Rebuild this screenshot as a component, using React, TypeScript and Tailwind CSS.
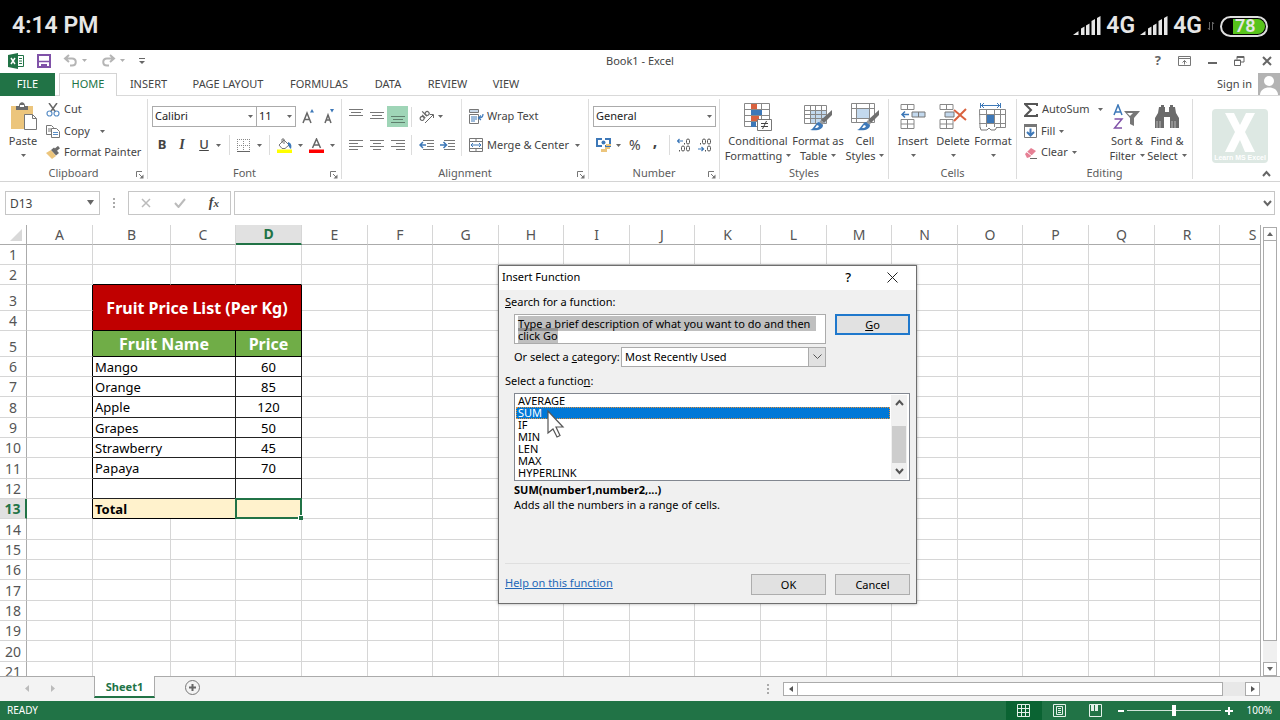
import { useEffect, useRef } from "react";
import type { ReactNode } from "react";

const columns = ["A", "B", "C", "D", "E", "F", "G", "H", "I", "J", "K", "L", "M", "N", "O", "P", "Q", "R", "S"];

const columnWidths = [
  "w-[66px]", "w-[78px]", "w-[65px]", "w-[66px]", "w-[66px]", "w-[65px]", "w-[66px]", "w-[65px]", "w-[66px]", "w-[65px]",
  "w-[66px]", "w-[66px]", "w-[65px]", "w-[66px]", "w-[65px]", "w-[66px]", "w-[66px]", "w-[65px]", "w-[66px]",
];

const rowHeights = [
  "h-[20px]", "h-[20px]", "h-[26px]", "h-[20px]", "h-[26px]",
  "h-[20px]", "h-[20px]", "h-[21px]", "h-[20px]", "h-[20px]", "h-[21px]", "h-[20px]", "h-[20px]",
  "h-[21px]", "h-[20px]", "h-[20px]", "h-[21px]", "h-[20px]", "h-[20px]", "h-[21px]", "h-[20px]",
];

const fruits: Record<number, [string, number]> = {
  6: ["Mango", 60],
  7: ["Orange", 85],
  8: ["Apple", 120],
  9: ["Grapes", 50],
  10: ["Strawberry", 45],
  11: ["Papaya", 70],
};

const functions = ["AVERAGE", "SUM", "IF", "MIN", "LEN", "MAX", "HYPERLINK"];

/* ---------- small shared pieces ---------- */

function Icon({ w, h, children }: { w: number; h: number; children: ReactNode }) {
  return (
    <svg width={w} height={h} viewBox={`0 0 ${w} ${h}`} fill="none" className="block shrink-0" aria-hidden="true">
      {children}
    </svg>
  );
}

function Caret({ light = false }: { light?: boolean }) {
  return (
    <Icon w={5} h={3}>
      <path d="M0 0h5L2.5 3z" fill={light ? "#b0b0b0" : "#666"} />
    </Icon>
  );
}

function Launcher() {
  return (
    <button aria-label="More options" className="absolute right-[3px] bottom-0">
      <Icon w={8} h={8}>
        <path d="M.5 6V.5H6M3 3l3 3" stroke="#777" />
        <path d="M7.500 3.500v4h-4z" fill="#777" />
      </Icon>
    </button>
  );
}

function Group({ label, width, launcher, children }: { label: string; width: string; launcher?: boolean; children: ReactNode }) {
  return (
    <section className={`${width} flex shrink-0 flex-col border-r border-[#dcdcdc]`}>
      <div className="flex-1">{children}</div>
      <div className="relative h-3 text-center leading-3 text-[#5c5c5c]">
        {label}
        {launcher && <Launcher />}
      </div>
    </section>
  );
}

function Divider() {
  return <span className="block h-5 w-px bg-[#dcdcdc]" />;
}

function BigButton({ icon, lines, width }: { icon: ReactNode; lines: string[]; width: string }) {
  return (
    <button className={`${width} flex flex-col items-center`}>
      <span className="flex h-[34px] items-center pt-0.5">{icon}</span>
      <span className="block leading-[15px] whitespace-nowrap">{lines[0]}</span>
      <span className="flex h-[15px] items-center gap-1 leading-[15px] whitespace-nowrap">
        {lines[1]}
        <Caret />
      </span>
    </button>
  );
}

function Lines({ rows, stroke = "#777" }: { rows: [number, number][]; stroke?: string }) {
  return (
    <Icon w={14} h={12}>
      {rows.map(([x, x2], i) => (
        <path key={i} d={`M${x} ${i * 3 + 1.5}H${x2}`} stroke={stroke} />
      ))}
    </Icon>
  );
}

/* ---------- phone status bar ---------- */

function Signal() {
  return (
    <Icon w={28} h={20}>
      <path d="M0 19l5.500-4v4zM8 12.500l3.500-2V19H8zM13 9.500l3.500-2V19H13zM18.500 5l3.500-2v16h-3.500zM24 2l3.500-2v19H24z" fill="#e6e6e6" />
    </Icon>
  );
}

function PhoneBar() {
  return (
    <header className="flex h-[50px] shrink-0 items-center justify-between bg-black px-3 pt-0.5 font-[Roboto,sans-serif] text-[23px] font-semibold text-[#e6e6e6]">
      <span>4:14 PM</span>
      <div className="flex items-center gap-[5px]">
        <Signal />
        <span>4G</span>
        <Signal />
        <span>4G</span>
        <Icon w={8} h={10}>
          <path d="M2.500 1v8M1 7l1.500 2M5.500 9V1L7 3" stroke="#666" />
        </Icon>
        <div className="flex h-[21px] w-12 items-center justify-end rounded-full border-2 border-[#dedede] p-px">
          <span className="flex h-[15px] w-8 items-center rounded-l-xs rounded-r-full bg-[#57c31b] pl-0.5 text-lg leading-none">78</span>
        </div>
      </div>
    </header>
  );
}

/* ---------- window chrome ---------- */

function TitleBar() {
  return (
    <div className="grid h-[23px] shrink-0 grid-cols-3 items-center px-2 pb-0.5">
      <div className="flex items-center">
        <Icon w={17} h={16}>
          <path d="M9 2.500h6.500v11H9M11 5.500h3M11 8h3M11 10.500h3" stroke="#217346" />
          <path d="M0 2l10-2v16L0 14z" fill="#217346" />
          <path d="M3 5l4 6M7 5l-4 6" stroke="#fff" strokeWidth="1.500" />
        </Icon>
        <button aria-label="Save" className="ml-3">
          <Icon w={14} h={14}>
            <path d="M1 1h12v12H1z" stroke="#8052a8" strokeWidth="2" />
            <path d="M2 7.500h10" stroke="#8052a8" strokeWidth="1.500" />
            <path d="M4 10h6v4H8v-2H6v2H4z" fill="#8052a8" />
          </Icon>
        </button>
        <button aria-label="Undo" className="ml-3 flex items-center gap-1">
          <Icon w={15} h={13}>
            <path d="M6 1L2 4.500 6 8M2.500 4.500H9c5 0 5 7 0 7H7" stroke="#b5b5b5" strokeWidth="2" />
          </Icon>
          <Caret light />
        </button>
        <button aria-label="Redo" className="ml-3.5 flex items-center gap-1">
          <Icon w={15} h={13}>
            <path d="M9 1l4 3.500L9 8M12.500 4.500H6c-5 0-5 7 0 7h2" stroke="#b5b5b5" strokeWidth="2" />
          </Icon>
          <Caret light />
        </button>
        <button aria-label="Customize toolbar" className="ml-3.5">
          <Icon w={6} h={6}>
            <path d="M0 .5h6" stroke="#666" />
            <path d="M0 3h6L3 6z" fill="#666" />
          </Icon>
        </button>
      </div>
      <h1 className="pt-0.5 text-center text-[11px]">Book1 - Excel</h1>
      <div className="flex items-center justify-end gap-[17px] text-[#666]">
        <button className="text-[13px] leading-none font-bold">?</button>
        <button aria-label="Ribbon options">
          <Icon w={13} h={10}>
            <path d="M.5.5h12v9H.5zM1 2.500h11M6.500 8.500V4.500M4.500 6.500l2-2 2 2" stroke="#777" />
          </Icon>
        </button>
        <button aria-label="Minimize">
          <Icon w={9} h={10}>
            <path d="M0 7h9" stroke="#666" strokeWidth="2" />
          </Icon>
        </button>
        <button aria-label="Restore">
          <Icon w={11} h={10}>
            <path d="M.5 4h6v5.500h-6zM.5 4.500h6M3 3.500V.5h7V6H7M3 1.500h7" stroke="#666" />
          </Icon>
        </button>
        <button aria-label="Close">
          <Icon w={10} h={10}>
            <path d="M1 1l8 8M9 1L1 9" stroke="#666" strokeWidth="2" />
          </Icon>
        </button>
      </div>
    </div>
  );
}

function TabBar() {
  return (
    <nav className="flex h-[23px] shrink-0 border-b border-[#d9d9d9] text-[11px] leading-[22px]">
      <button className="-mb-px w-[55px] bg-[#217346] pb-px text-white">FILE</button>
      <button className="-mb-px ml-1 w-[58px] border border-b-0 border-[#d4d4d4] bg-white pb-0.5 leading-5 text-[#217346]">HOME</button>
      <button className="w-[63px]">INSERT</button>
      <button className="w-24">PAGE LAYOUT</button>
      <button className="w-[86px]">FORMULAS</button>
      <button className="w-[52px]">DATA</button>
      <button className="w-[67px]">REVIEW</button>
      <button className="w-[50px]">VIEW</button>
      <div className="ml-auto flex">
        <a href="#signin" className="mr-1.5">Sign in</a>
        <svg width="22" height="22" viewBox="0 0 22 22" aria-hidden="true">
          <path d="M0 0h22v22H0z" fill="#b3b3b3" />
          <circle cx="11" cy="8" r="5" fill="#fff" />
          <path d="M2 22c0-10 18-10 18 0z" fill="#fff" />
        </svg>
      </div>
    </nav>
  );
}

/* ---------- ribbon ---------- */

function ClipboardGroup() {
  return (
    <Group label="Clipboard" width="w-[148px]" launcher>
      <div className="flex">
        <button className="flex w-[46px] flex-col items-center">
          <Icon w={28} h={31}>
            <path d="M2 7h22v23H2z" fill="#ecc57c" />
            <path d="M7 7h3c0-5 6-5 6 0h3v4H7z" fill="#6b6b6b" />
            <path d="M11 6h4v2h-4z" fill="#fff" />
            <path d="M15.500 15.500h8l4 4v11h-12z" fill="#fff" stroke="#777" />
            <path d="M23.500 15.500v4h4" stroke="#777" />
          </Icon>
          <span className="mt-[3px] leading-[15px]">Paste</span>
          <span className="mt-1.5"><Caret /></span>
        </button>
        <div className="flex flex-col">
          <button className="flex h-[21px] items-center gap-1">
            <Icon w={14} h={14}>
              <path d="M3 0l6.500 9M11 0L4.500 9" stroke="#666" strokeWidth="1.500" />
              <circle cx="3.500" cy="10.500" r="2.500" stroke="#5b8fc7" strokeWidth="1.200" />
              <circle cx="10.500" cy="10.500" r="2.500" stroke="#5b8fc7" strokeWidth="1.200" />
            </Icon>
            Cut
          </button>
          <button className="flex h-[22px] items-center gap-1">
            <Icon w={14} h={13}>
              <path d="M.5.5h5l2 2v7h-7zM2 4h3M2 6h3" stroke="#777" />
              <path d="M5.500 3.500h5l3 3v6h-8z" fill="#fff" stroke="#777" />
              <path d="M7 7.500h5M7 9.500h5" stroke="#5b8fc7" />
            </Icon>
            <span className="mr-1.5">Copy</span>
            <Caret />
          </button>
          <button className="flex h-[21px] items-center gap-1 whitespace-nowrap">
            <Icon w={14} h={13}>
              <path d="M0 7l5-3 5 6-4 3z" fill="#ecc57c" />
              <path d="M5 4l3-2.500 5 5.500-3 2.500z" fill="#6b6b6b" />
              <path d="M9.500 4L13 1" stroke="#6b6b6b" strokeWidth="3" />
            </Icon>
            Format Painter
          </button>
        </div>
      </div>
    </Group>
  );
}

function FontGroup() {
  return (
    <Group label="Font" width="w-[194px]" launcher>
      <div className="flex h-[35px] items-center pl-1">
        <div className="relative">
          <select aria-label="Font" className="block h-[21px] w-[105px] appearance-none border border-[#ababab] px-0.5 text-[#222]">
            <option>Calibri</option>
          </select>
          <span className="pointer-events-none absolute top-[9px] right-1"><Caret /></span>
        </div>
        <div className="relative -ml-px">
          <select aria-label="Font size" className="block h-[21px] w-10 appearance-none border border-[#ababab] px-0.5 text-[#222]">
            <option>11</option>
          </select>
          <span className="pointer-events-none absolute top-[9px] right-1"><Caret /></span>
        </div>
        <button aria-label="Increase font size" className="ml-1.5">
          <Icon w={13} h={15}>
            <path d="M1 14L5 4l4 10M2.500 10.500h5" stroke="#666" strokeWidth="1.500" />
            <path d="M8 3.500h4L10 0z" fill="#3d78b8" />
          </Icon>
        </button>
        <button aria-label="Decrease font size" className="ml-2">
          <Icon w={13} h={15}>
            <path d="M2 14l3-8 3 8M3 11h4" stroke="#666" strokeWidth="1.500" />
            <path d="M7 0h4L9 3.500z" fill="#3d78b8" />
          </Icon>
        </button>
      </div>
      <div className="flex h-[22px] items-center pl-2 text-[13px]">
        <button className="w-3 font-bold">B</button>
        <button className="ml-2 w-3 font-[Liberation_Serif,serif] text-sm font-bold italic">I</button>
        <button className="ml-2.5 w-3 font-medium underline">U</button>
        <span className="mr-2 ml-1.5"><Caret /></span>
        <Divider />
        <button aria-label="Borders" className="ml-[7px] flex items-center gap-[7px]">
          <Icon w={13} h={13}>
            <path d="M0 .5h13M0 6.500h13M.5 0v13M6.500 0v13M12.500 0v13" stroke="#888" strokeDasharray="1 1" />
            <path d="M0 12.500h13" stroke="#666" />
          </Icon>
          <Caret />
        </button>
        <span className="mx-[7px]"><Divider /></span>
        <button aria-label="Fill color" className="flex items-center gap-1.5">
          <Icon w={15} h={15}>
            <path d="M2 7l5-5 5 5-4 3.500H5z" fill="#fff" stroke="#777" />
            <path d="M5 5V1h2v5" stroke="#777" />
            <path d="M11 4c3 1 4 3 3 7-2-1-2-3-3-4z" fill="#3d78b8" />
            <path d="M0 11.500h15V15H0z" fill="#ff0" />
          </Icon>
          <Caret />
        </button>
        <button aria-label="Font color" className="ml-1.5 flex items-center gap-1.5">
          <Icon w={15} h={15}>
            <path d="M3.500 10l4-9 4 9M5 7h5" stroke="#666" strokeWidth="1.500" />
            <path d="M0 11.500h15V15H0z" fill="#f00" />
          </Icon>
          <Caret />
        </button>
      </div>
    </Group>
  );
}

function IndentIcon({ right }: { right?: boolean }) {
  return (
    <Icon w={15} h={12}>
      <path d="M4 1.500h11M8 4.500h7M8 7.500h7M4 10.500h11" stroke="#777" />
      <path d={right ? "M0 6h6M3.500 3l3 3-3 3" : "M1 6h6M4 3L1 6l3 3"} stroke="#3d78b8" strokeWidth="1.500" />
    </Icon>
  );
}

function AlignmentGroup() {
  return (
    <Group label="Alignment" width="w-[247px]" launcher>
      <div className="flex">
        <div className="flex flex-col pl-[3px]">
          <div className="flex h-[35px] items-center">
            <button aria-label="Top align" className="flex h-[21px] w-[21px] justify-center pt-0.5"><Lines rows={[[0, 14], [2, 12], [0, 14]]} /></button>
            <button aria-label="Middle align" className="flex h-[21px] w-[21px] items-center justify-center"><Lines rows={[[0, 14], [2, 12], [0, 14]]} /></button>
            <button aria-label="Bottom align" className="flex h-[21px] w-[21px] items-end justify-center bg-[#9fd5b7]"><Lines rows={[[0, 14], [2, 12], [0, 14]]} stroke="#5f7f6d" /></button>
            <span className="mx-[3px]"><Divider /></span>
            <button aria-label="Orientation" className="ml-1 flex items-center gap-1">
              <Icon w={15} h={14}>
                <g transform="rotate(-45 6 7)" stroke="#666" strokeWidth="1.200">
                  <circle cx="3" cy="6" r="2" />
                  <path d="M5.500 3.500V8M8 1v7" />
                  <circle cx="10" cy="6" r="2" />
                </g>
                <path d="M6 13l8-8M11 4.500h3.500V8" stroke="#666" />
              </Icon>
              <Caret />
            </button>
          </div>
          <div className="flex h-[22px] items-center">
            <button aria-label="Align left" className="flex w-[21px] justify-center"><Lines rows={[[0, 14], [0, 9], [0, 14], [0, 9]]} /></button>
            <button aria-label="Center" className="flex w-[21px] justify-center"><Lines rows={[[0, 14], [3, 11], [0, 14], [3, 11]]} /></button>
            <button aria-label="Align right" className="flex w-[21px] justify-center"><Lines rows={[[0, 14], [5, 14], [0, 14], [5, 14]]} /></button>
            <span className="mx-[3px]"><Divider /></span>
            <button aria-label="Decrease indent" className="ml-1"><IndentIcon /></button>
            <button aria-label="Increase indent" className="ml-1.5"><IndentIcon right /></button>
          </div>
        </div>
        <div className="ml-1.5 flex flex-col border-l border-[#e1e1e1] pl-[7px]">
          <button className="flex h-[35px] items-center gap-[3px]">
            <Icon w={15} h={15}>
              <path d="M.5.500h9v3h-9z" fill="#c9d9ea" stroke="#777" />
              <path d="M.5 5.500h9v9h-9z" fill="#fff" stroke="#777" />
              <path d="M2 8h6M2 10h6M2 12h4" stroke="#3d78b8" />
              <path d="M14 5c0 3-1 4-4 4M12 6.500L9.500 9l2.500 2" stroke="#3d78b8" strokeWidth="1.200" />
            </Icon>
            Wrap Text
          </button>
          <button className="flex h-[22px] items-center gap-1 whitespace-nowrap">
            <Icon w={14} h={14}>
              <path d="M.5.5h13v13H.5zM0 3.500h14M0 10.500h14M7 0v3M7 11v3" stroke="#777" />
              <path d="M2 7h10M4 5L2 7l2 2M10 5l2 2-2 2" stroke="#3d78b8" />
            </Icon>
            Merge &amp; Center
            <span className="ml-0.5"><Caret /></span>
          </button>
        </div>
      </div>
    </Group>
  );
}

function NumberGroup() {
  return (
    <Group label="Number" width="w-[131px]" launcher>
      <div className="flex h-[35px] items-center pl-1">
        <div className="relative">
          <select aria-label="Number format" className="block h-[21px] w-[123px] appearance-none border border-[#ababab] px-0.5 text-[#222]">
            <option>General</option>
          </select>
          <span className="pointer-events-none absolute top-[9px] right-1"><Caret /></span>
        </div>
      </div>
      <div className="flex h-[22px] items-center pl-[7px]">
        <button aria-label="Accounting format" className="flex items-center gap-1">
          <Icon w={16} h={15}>
            <path d="M1 1h13v7H1z" fill="#fff" stroke="#3d78b8" strokeWidth="2" />
            <path d="M6 1h3M6 8h3" stroke="#fff" strokeWidth="2" />
            <circle cx="7.500" cy="4.500" r="2" fill="#3d78b8" />
            <path d="M10 6h5v2h-5zM9 9h5v2H9zM5 11h6v3H5z" fill="#ecc57c" />
          </Icon>
          <Caret />
        </button>
        <button className="ml-2 text-sm">%</button>
        <button className="ml-3 pb-2 text-base leading-3 font-bold">,</button>
        <span className="mr-[7px] ml-3"><Divider /></span>
        <button aria-label="Increase decimal">
          <Icon w={14} h={14}>
            <path d="M0 3h6M2.500 1L.5 3l2 2" stroke="#3d78b8" strokeWidth="1.200" />
            <path d="M7.500 5v1.500M2.500 12v1.500" stroke="#555" />
            <rect x="9.500" y="1" width="3" height="5" rx="1.500" stroke="#555" />
            <rect x="4.500" y="8" width="3" height="5" rx="1.500" stroke="#555" />
            <rect x="9.500" y="8" width="3" height="5" rx="1.500" stroke="#555" />
          </Icon>
        </button>
        <button aria-label="Decrease decimal" className="ml-[7px]">
          <Icon w={14} h={14}>
            <path d="M0 11h6M3.500 9l2 2-2 2" stroke="#3d78b8" strokeWidth="1.200" />
            <path d="M2.500 5v1.500M7.500 12v1.500" stroke="#555" />
            <rect x="4.500" y="1" width="3" height="5" rx="1.500" stroke="#555" />
            <rect x="9.500" y="1" width="3" height="5" rx="1.500" stroke="#555" />
            <rect x="9.500" y="8" width="3" height="5" rx="1.500" stroke="#555" />
          </Icon>
        </button>
      </div>
    </Group>
  );
}

function Brush() {
  return (
    <g>
      <path d="M28 7v5l-8 8-3-3z" fill="#6f6f6f" />
      <path d="M17 17l3 3-1.500 2-3-3z" fill="#999" />
      <path d="M15 19l4 3c0 4-4 6-13 5 4-1 5-7 9-8z" fill="#3d78b8" />
      <path d="M13 22l2 1c-1 2-2 2-4 2z" fill="#fff" />
    </g>
  );
}

function StylesGroup() {
  return (
    <Group label="Styles" width="w-[169px]">
      <div className="flex pl-1.5">
        <BigButton
          width="w-16"
          lines={["Conditional", "Formatting"]}
          icon={
            <Icon w={28} h={28}>
              <path d="M.5.5h25v23H.5zM0 6.500h26M0 12.500h26M0 18.500h26M7.500 0v24M17.500 0v24" stroke="#888" />
              <path d="M7 1h6v5H7zM7 13h8v5H7z" fill="#d9623f" />
              <path d="M7 7h11v5H7zM7 19h5v5H7z" fill="#3d78b8" />
              <path d="M13.500 16.500h14v11h-14z" fill="#fff" stroke="#777" />
              <path d="M17 20.500h7M17 23.500h7M18.500 26l4-8" stroke="#444" />
            </Icon>
          }
        />
        <BigButton
          width="w-14"
          lines={["Format as", "Table"]}
          icon={
            <Icon w={28} h={28}>
              <path d="M6 8h17v12H6z" fill="#c3d9ee" />
              <path d="M.5 2.500h22v18H.5zM0 7.500h23M0 11.500h23M0 15.500h23M6.500 2v18M11.500 2v18M17.500 2v18" stroke="#888" />
              <Brush />
            </Icon>
          }
        />
        <BigButton
          width="w-[38px]"
          lines={["Cell", "Styles"]}
          icon={
            <Icon w={28} h={28}>
              <path d="M5 5h14v10H5z" fill="#c3d9ee" />
              <path d="M.5.5h23v19H.5zM0 5.500h24M0 15.500h24M5.500 0v20M18.500 0v20" stroke="#888" />
              <Brush />
            </Icon>
          }
        />
      </div>
    </Group>
  );
}

function CellsGroup() {
  return (
    <Group label="Cells" width="w-[128px]">
      <div className="flex pl-1">
        <BigButton
          width="w-10"
          lines={["Insert", ""]}
          icon={
            <Icon w={26} h={26}>
              <path d="M1 .5h13v5H1zM7.500 0v6M1 15.500h13v9H1zM1 20h13M7.500 15v10" stroke="#888" />
              <path d="M12 8h13v5H12z" fill="#c3d9ee" stroke="#777" />
              <path d="M18.500 8v5" stroke="#777" />
              <path d="M2 10.500h7M5 7.500l-3 3 3 3" stroke="#3d78b8" strokeWidth="1.500" />
            </Icon>
          }
        />
        <BigButton
          width="w-10"
          lines={["Delete", ""]}
          icon={
            <Icon w={28} h={26}>
              <path d="M1 .5h13v5H1zM7.500 0v6M1 15.500h13v9H1zM1 20h13M7.500 15v10" stroke="#888" />
              <path d="M6 8h9v5H6z" fill="#c3d9ee" stroke="#777" />
              <path d="M15 6l12 10M27 5L15 17" stroke="#d9623f" strokeWidth="2" />
            </Icon>
          }
        />
        <BigButton
          width="w-10"
          lines={["Format", ""]}
          icon={
            <Icon w={28} h={28}>
              <path d="M1.500 0v5M21.500 0v5M2 2.500h19M5 0L2.500 2.500 5 5M18 0l2.500 2.500L18 5" stroke="#3d78b8" />
              <path d="M.5 6.500h26v18H1zM0 11.500h27M0 20.500h27M7.500 6v18M15.500 6v18M21.500 6v18" stroke="#888" />
              <path d="M8 12h7v8H8z" fill="#3d78b8" />
              <path d="M1 24l1 3h6l2-2 2 2h4l2-3" fill="#fff" stroke="#777" />
            </Icon>
          }
        />
      </div>
    </Group>
  );
}

function EditingGroup() {
  return (
    <Group label="Editing" width="w-[176px]">
      <div className="flex pl-[7px]">
        <div className="flex w-[83px] flex-col">
          <button className="flex h-[21px] items-center gap-1">
            <Icon w={14} h={14}>
              <path d="M13 3V1H1l6 6-6 6h12v-2" stroke="#555" strokeWidth="2" />
            </Icon>
            AutoSum
            <span className="ml-1"><Caret /></span>
          </button>
          <button className="flex h-[22px] items-center gap-1">
            <Icon w={13} h={14}>
              <path d="M.5.5h12v13H.5z" fill="#fff" stroke="#777" />
              <path d="M0 0h13v3H0z" fill="#777" />
              <path d="M6.500 4.500v7M3 8l3.500 3.500L10 8" stroke="#3d78b8" strokeWidth="2" />
            </Icon>
            Fill
            <Caret />
          </button>
          <button className="flex h-[21px] items-center gap-1">
            <Icon w={13} h={12}>
              <path d="M1 7l6-6 5 3-6 6-3 1z" fill="#e68095" />
              <path d="M3 5l5 4" stroke="#fff" />
              <path d="M6 11.500h7" stroke="#666" />
            </Icon>
            Clear
            <Caret />
          </button>
        </div>
        <BigButton
          width="w-10"
          lines={["Sort &", "Filter"]}
          icon={
            <Icon w={28} h={26}>
              <path d="M1 11L5 1l4 10M2.500 8h5" stroke="#3d78b8" strokeWidth="1.500" />
              <path d="M1.500 15H9l-7.500 9H9" stroke="#8052a8" strokeWidth="1.500" />
              <path d="M11 7h16l-6 7v8l-4-2v-6z" fill="#777" />
              <path d="M14 9h6l-3 3z" fill="#fff" />
            </Icon>
          }
        />
        <BigButton
          width="w-10"
          lines={["Find &", "Select"]}
          icon={
            <Icon w={26} h={24}>
              <path d="M5 2h2V0h3v2h1v5h4V2h1V0h3v2h2l1 6 3 5v10h-9V12h-6v11H1V13l3-5z" fill="#6b6b6b" />
              <path d="M3 16v7M6 16v7M18 16v7M21 16v7" stroke="#bbb" />
            </Icon>
          }
        />
      </div>
    </Group>
  );
}

function Ribbon() {
  return (
    <div className="flex h-[86px] shrink-0 border-b border-[#d4d4d4] pt-[3px] pb-0.5 text-[11px]">
      <ClipboardGroup />
      <FontGroup />
      <AlignmentGroup />
      <NumberGroup />
      <StylesGroup />
      <CellsGroup />
      <EditingGroup />
      <div className="relative flex flex-1 justify-end pt-2.5 pr-3">
        <div className="flex h-[54px] w-14 flex-col items-center justify-end rounded bg-[#dde8e3] font-[Liberation_Sans,sans-serif] text-[7px] font-bold whitespace-nowrap text-white">
          <Icon w={32} h={42}>
            <path d="M1 2h9l6 12 6-12h9L21 21l10 20H21l-5-12-6 12H1l10-20z" fill="#fff" />
          </Icon>
          <span className="leading-[10px]">Learn MS Excel</span>
        </div>
        <button aria-label="Collapse ribbon" className="absolute right-[9px] bottom-0.5">
          <Icon w={9} h={7}>
            <path d="M1 6l3.500-4L8 6" stroke="#666" strokeWidth="2" />
          </Icon>
        </button>
      </div>
    </div>
  );
}

function FormulaBar() {
  return (
    <div className="flex shrink-0 items-center px-[5px] pt-[9px] pb-[10px]">
      <div className="relative">
        <input aria-label="Name box" defaultValue="D13" className="block h-6 w-[95px] border border-[#c6c6c6] px-1 text-xs" />
        <span className="pointer-events-none absolute top-[9px] right-1.5">
          <Icon w={7} h={5}>
            <path d="M0 0h7L3.500 5z" fill="#666" />
          </Icon>
        </span>
      </div>
      <span className="mr-[13px] ml-[13px]">
        <Icon w={2} h={10}>
          <path d="M0 0h2v2H0zM0 4h2v2H0zM0 8h2v2H0z" fill="#aaa" />
        </Icon>
      </span>
      <div className="flex h-6 w-[103px] items-center justify-between border border-[#c6c6c6] pr-[11px] pl-3">
        <button aria-label="Cancel entry">
          <Icon w={10} h={10}>
            <path d="M1 1l8 8M9 1L1 9" stroke="#bbb" strokeWidth="1.500" />
          </Icon>
        </button>
        <button aria-label="Enter">
          <Icon w={12} h={10}>
            <path d="M1 5l3.500 4L11 1" stroke="#bbb" strokeWidth="2" />
          </Icon>
        </button>
        <button aria-label="Insert function" className="font-[Liberation_Serif,serif] text-sm leading-none font-bold italic">
          f<span className="text-[11px]">x</span>
        </button>
      </div>
      <div className="ml-[3px] flex h-6 flex-1 items-center border border-[#c6c6c6] pr-0.5">
        <input aria-label="Formula" className="h-full flex-1 px-1 text-xs outline-none" />
        <button aria-label="Expand formula bar">
          <Icon w={9} h={7}>
            <path d="M1 1l3.500 4L8 1" stroke="#666" strokeWidth="2" />
          </Icon>
        </button>
      </div>
    </div>
  );
}

/* ---------- worksheet ---------- */

// the cells of columns B to D, which hold the price list
function ListCells({ row }: { row: number }) {
  if (row === 4) return null;
  if (row === 3) {
    return (
      <td colSpan={3} rowSpan={2} className="border-r border-b border-black bg-[#c00000] p-0 text-center text-base/6 font-bold text-white">
        Fruit Price List (Per Kg)
      </td>
    );
  }
  if (row === 5) {
    return (
      <>
        <td colSpan={2} className="border-r border-b border-black bg-[#70ad47] p-0 text-center text-base/6 font-bold text-white">Fruit Name</td>
        <td className="border-r border-b border-black bg-[#70ad47] p-0 text-center text-base/6 font-bold text-white">Price</td>
      </>
    );
  }
  if (row === 13) {
    return (
      <>
        <td colSpan={2} className="border-r border-b border-black bg-[#fff2cc] p-0 pl-0.5 text-[13px] font-bold text-black">Total</td>
        <td className="relative bg-[#fff2cc] p-0">
          <span className="absolute -top-px right-0 bottom-0 -left-px border-2 border-[#217346]" />
          <span className="absolute -right-px -bottom-px size-[5px] border-t border-l border-white bg-[#217346]" />
        </td>
      </>
    );
  }
  if (row > 5 && row < 13) {
    const item = fruits[row];
    return (
      <>
        <td colSpan={2} className="border-r border-b border-[#222] p-0 pl-0.5 text-[13px] text-black">{item?.[0]}</td>
        <td className="border-r border-b border-[#222] p-0 text-center text-[13px] text-black">{item?.[1]}</td>
      </>
    );
  }
  const line = row === 2 ? "border-b-black" : "border-b-[#d6d6d6]";
  return (
    <>
      <td className={`border-r border-b border-r-[#d6d6d6] p-0 ${line}`} />
      <td className={`border-r border-b border-r-[#d6d6d6] p-0 ${line}`} />
      <td className={`border-r border-b border-r-[#d6d6d6] p-0 ${line}`} />
    </>
  );
}

function Sheet() {
  return (
    <table className="w-[1286px] table-fixed border-separate border-spacing-0 leading-[18px]">
      <colgroup>
        <col className="w-[27px]" />
        {columnWidths.map((w, i) => (
          <col key={i} className={w} />
        ))}
      </colgroup>
      <thead>
        <tr className="h-[20px] text-sm/[18px] text-[#555]">
          <th className="border-r border-b border-[#ababab] p-0">
            <span className="flex justify-end pr-1">
              <Icon w={12} h={12}>
                <path d="M12 0v12H0z" fill="#d9d9d9" />
              </Icon>
            </span>
          </th>
          {columns.map((c) => (
            <th
              key={c}
              className={
                c === "D"
                  ? "border-r border-b-2 border-r-[#d6d6d6] border-b-[#217346] bg-[#e1e1e1] p-0 font-bold text-[#217346]"
                  : "border-r border-b border-r-[#d6d6d6] border-b-[#ababab] p-0 font-normal"
              }
            >
              {c}
            </th>
          ))}
        </tr>
      </thead>
      <tbody>
        {rowHeights.map((height, i) => {
          const row = i + 1;
          return (
            <tr key={row} className={height}>
              <th
                className={
                  row === 13
                    ? "border-r-2 border-b border-r-[#217346] border-b-[#d6d6d6] bg-[#e1e1e1] p-0 align-bottom text-sm/[18px] font-bold text-[#217346]"
                    : "border-r border-b border-r-[#ababab] border-b-[#d6d6d6] p-0 align-bottom text-sm/[18px] font-normal text-[#555]"
                }
              >
                {row}
              </th>
              <td className={`border-r border-b border-b-[#d6d6d6] p-0 ${row > 2 && row < 14 ? "border-r-black" : "border-r-[#d6d6d6]"}`} />
              <ListCells row={row} />
              {columns.slice(4).map((c) => (
                <td key={c} className="border-r border-b border-[#d6d6d6] p-0" />
              ))}
            </tr>
          );
        })}
      </tbody>
    </table>
  );
}

function VerticalScroll() {
  return (
    <div className="flex w-5 shrink-0 flex-col items-center border-l border-[#ababab] bg-white pr-px">
      <div className="mt-0.5 flex w-3.5 flex-1 flex-col bg-[#f0f0f0]">
        <button aria-label="Scroll up" className="flex h-3.5 items-center justify-center border border-[#ababab] bg-white">
          <Icon w={6} h={4}>
            <path d="M0 4h6L3 0z" fill="#666" />
          </Icon>
        </button>
        <div className="-mt-px flex-1 border border-[#ababab] bg-white" />
        <div className="h-[21px]" />
        <button aria-label="Scroll down" className="flex h-3.5 items-center justify-center border border-[#ababab] bg-white">
          <Icon w={6} h={4}>
            <path d="M0 0h6L3 4z" fill="#666" />
          </Icon>
        </button>
      </div>
    </div>
  );
}

function SheetTabs() {
  return (
    <div className="flex h-[25px] shrink-0 items-start border-t border-[#ababab] bg-[#f3f3f3] pr-5">
      <div className="flex h-[22px] w-[94px] items-center gap-[22px] pl-6">
        <button aria-label="Previous sheet">
          <Icon w={5} h={7}>
            <path d="M5 0v7L1 3.500z" fill="#bbb" />
          </Icon>
        </button>
        <button aria-label="Next sheet">
          <Icon w={5} h={7}>
            <path d="M0 0v7l4-3.500z" fill="#bbb" />
          </Icon>
        </button>
      </div>
      <button className="-mt-px h-[22px] w-[61px] border-x border-b-2 border-x-[#ababab] border-b-[#217346] bg-white pt-0.5 text-[11px] leading-[18px] font-bold text-[#217346]">
        Sheet1
      </button>
      <button aria-label="New sheet" className="mt-[3px] ml-[30px]">
        <Icon w={15} h={15}>
          <circle cx="7.500" cy="7.500" r="7" stroke="#777" />
          <path d="M7.500 4v7M4 7.500h7" stroke="#666" strokeWidth="2" />
        </Icon>
      </button>
      <div className="ml-auto flex h-3.5 w-[493px] items-center self-center">
        <span className="w-4">
          <Icon w={2} h={10}>
            <path d="M0 0h2v2H0zM0 4h2v2H0zM0 8h2v2H0z" fill="#aaa" />
          </Icon>
        </span>
        <button aria-label="Scroll left" className="flex h-3.5 w-[15px] items-center justify-center border border-[#ababab] bg-white">
          <Icon w={4} h={6}>
            <path d="M4 0v6L0 3z" fill="#555" />
          </Icon>
        </button>
        <div className="-ml-px h-3.5 flex-1 border border-[#ababab] bg-white" />
        <div className="h-3.5 w-[22px] bg-[#e8e8e8]" />
        <button aria-label="Scroll right" className="flex h-3.5 w-[15px] items-center justify-center border border-[#ababab] bg-white">
          <Icon w={4} h={6}>
            <path d="M0 0v6l4-3z" fill="#555" />
          </Icon>
        </button>
      </div>
    </div>
  );
}

function StatusBar() {
  return (
    <footer className="flex h-[19px] shrink-0 items-center bg-[#217346] pr-2 pl-[7px] text-[10px] text-white">
      <span>READY</span>
      <div className="ml-auto flex h-full items-center">
        <button aria-label="Normal view" className="flex h-full w-9 items-center justify-center bg-[#0a6332]">
          <Icon w={13} h={13}>
            <path d="M.5.5h12v12H.5zM4.500 0v13M8.500 0v13M0 4.500h13M0 8.500h13" stroke="#e4f1ea" />
          </Icon>
        </button>
        <button aria-label="Page layout view" className="flex w-9 justify-center">
          <Icon w={13} h={13}>
            <path d="M.5.5h12v12H.5zM3.500 2.500h6v8h-6zM5 4.500h3M5 6.500h3M5 8.500h3" stroke="#e4f1ea" />
          </Icon>
        </button>
        <button aria-label="Page break view" className="flex w-9 justify-center">
          <Icon w={13} h={13}>
            <path d="M.5.5h12v12H.5z" stroke="#e4f1ea" />
            <path d="M2 0h3v7H2zM6 0h3v7H6z" fill="#e4f1ea" />
          </Icon>
        </button>
        <button aria-label="Zoom out" className="ml-1">
          <Icon w={6} h={8}>
            <path d="M0 4h6" stroke="#fff" strokeWidth="2" />
          </Icon>
        </button>
        <input
          type="range"
          aria-label="Zoom"
          defaultValue="50"
          className="mr-1 ml-[3px] h-[11px] w-[94px] appearance-none bg-transparent [&::-webkit-slider-runnable-track]:h-[11px] [&::-webkit-slider-runnable-track]:bg-[linear-gradient(transparent_5px,#cfe3d8_5px,#cfe3d8_6px,transparent_6px)] [&::-webkit-slider-thumb]:h-[11px] [&::-webkit-slider-thumb]:w-1 [&::-webkit-slider-thumb]:appearance-none [&::-webkit-slider-thumb]:bg-white"
        />
        <button aria-label="Zoom in">
          <Icon w={8} h={8}>
            <path d="M0 4h8M4 0v8" stroke="#fff" strokeWidth="2" />
          </Icon>
        </button>
        <span className="ml-3.5">100%</span>
      </div>
    </footer>
  );
}

/* ---------- dialog ---------- */

function InsertFunctionDialog() {
  const searchRef = useRef<HTMLTextAreaElement>(null);

  // the hint starts selected, so typing replaces it
  useEffect(() => {
    searchRef.current?.focus();
    searchRef.current?.select();
  }, []);

  return (
    <div
      role="dialog"
      aria-label="Insert Function"
      className="absolute top-10 left-[498px] w-[419px] border border-[#6e6e6e] bg-[#f0f0f0] text-[11px] leading-3 text-black shadow-[0_0_3px_rgba(0,0,0,0.35)]"
    >
      <div className="flex h-6 items-center bg-white pr-[18px] pb-0.5 pl-[3px]">
        <h2 className="flex-1">Insert Function</h2>
        <button className="mr-9 text-[13px] font-medium">?</button>
        <button aria-label="Close dialog">
          <Icon w={11} h={11}>
            <path d="M.5.5l10 10M10.500.5l-10 10" stroke="#222" />
          </Icon>
        </button>
      </div>

      <div className="px-1.5 pt-[5px] pb-2">
        <label htmlFor="search" className="block leading-[14px]">
          <u>S</u>earch for a function:
        </label>
        <div className="mt-[5px] ml-[9px] flex items-start justify-between">
          <textarea
            id="search"
            ref={searchRef}
            rows={2}
            defaultValue="Type a brief description of what you want to do and then click Go"
            className="block h-[30px] w-[312px] resize-none overflow-hidden border border-[#ababab] bg-white px-[3px] pt-[3px] leading-3 outline-none selection:bg-black/25 selection:text-black"
          />
          <button className="h-[21px] w-[75px] border-2 border-[#1f78cc] bg-[#e1e1e1]">
            <u>G</u>o
          </button>
        </div>
        <div className="mt-[3px] ml-[9px] flex items-center">
          <label htmlFor="category" className="w-[107px] whitespace-nowrap">
            Or select a <u>c</u>ategory:
          </label>
          <div className="relative">
            <select id="category" className="block h-5 w-[205px] appearance-none border border-[#ababab] bg-white px-[3px]">
              <option>Most Recently Used</option>
            </select>
            <span className="pointer-events-none absolute top-0 right-0 flex h-5 w-[18px] items-center justify-center border border-[#ababab] bg-[#e1e1e1]">
              <Icon w={9} h={6}>
                <path d="M.5.5l4 4 4-4" stroke="#555" />
              </Icon>
            </span>
          </div>
        </div>

        <p id="functions" className="mt-[7px] leading-[14px]">
          Select a functio<u>n</u>:
        </p>
        <div className="relative mt-[5px] ml-[9px] flex h-[88px] border border-[#828790] bg-white p-px">
          <ul role="listbox" aria-labelledby="functions" className="flex-1">
            {functions.map((name) => (
              <li
                key={name}
                role="option"
                aria-selected={name === "SUM"}
                className={name === "SUM" ? "bg-[#0078d7] pl-0.5 text-white outline-1 -outline-offset-1 outline-dotted outline-[#e0903a]" : "pl-0.5"}
              >
                {name}
              </li>
            ))}
          </ul>
          <div className="mr-px ml-px flex w-4 flex-col items-center justify-between bg-[#f0f0f0] py-1">
            <Icon w={9} h={7}>
              <path d="M1 6l3.500-4L8 6" stroke="#555" strokeWidth="2" />
            </Icon>
            <span className="mt-[14px] h-[37px] w-3.5 bg-[#cdcdcd]" />
            <Icon w={9} h={7}>
              <path d="M1 1l3.500 4L8 1" stroke="#555" strokeWidth="2" />
            </Icon>
          </div>
          {/* mouse pointer */}
          <svg width="18" height="30" viewBox="0 0 18 30" className="absolute top-4 left-8" aria-hidden="true">
            <path d="M1 1v22l5-4 4 8 3-1.500-4-8.500h7z" fill="#fff" stroke="#555" strokeWidth="1.200" />
          </svg>
        </div>
        <div className="mt-px ml-[9px] h-[81px]">
          <p className="leading-[15px] font-bold">SUM(number1,number2,...)</p>
          <p className="leading-[15px]">Adds all the numbers in a range of cells.</p>
        </div>

        <div className="flex items-center border-t border-[#dfdfdf] pt-[10px]">
          <a href="#help" className="mr-auto pb-1 text-[#2468b8] underline">Help on this function</a>
          <button className="mr-[9px] h-[21px] w-[75px] border border-[#adadad] bg-[#e1e1e1]">OK</button>
          <button className="h-[21px] w-[75px] border border-[#adadad] bg-[#e1e1e1]">Cancel</button>
        </div>
      </div>
    </div>
  );
}

export default function App() {
  return (
    <div className="flex h-screen flex-col overflow-hidden bg-white font-[Noto_Sans,sans-serif] text-[#444]">
      <PhoneBar />
      <TitleBar />
      <TabBar />
      <Ribbon />
      <FormulaBar />
      <main className="relative flex min-h-0 flex-1">
        <div className="min-w-0 flex-1 overflow-hidden">
          <Sheet />
        </div>
        <VerticalScroll />
        <InsertFunctionDialog />
      </main>
      <SheetTabs />
      <StatusBar />
    </div>
  );
}
